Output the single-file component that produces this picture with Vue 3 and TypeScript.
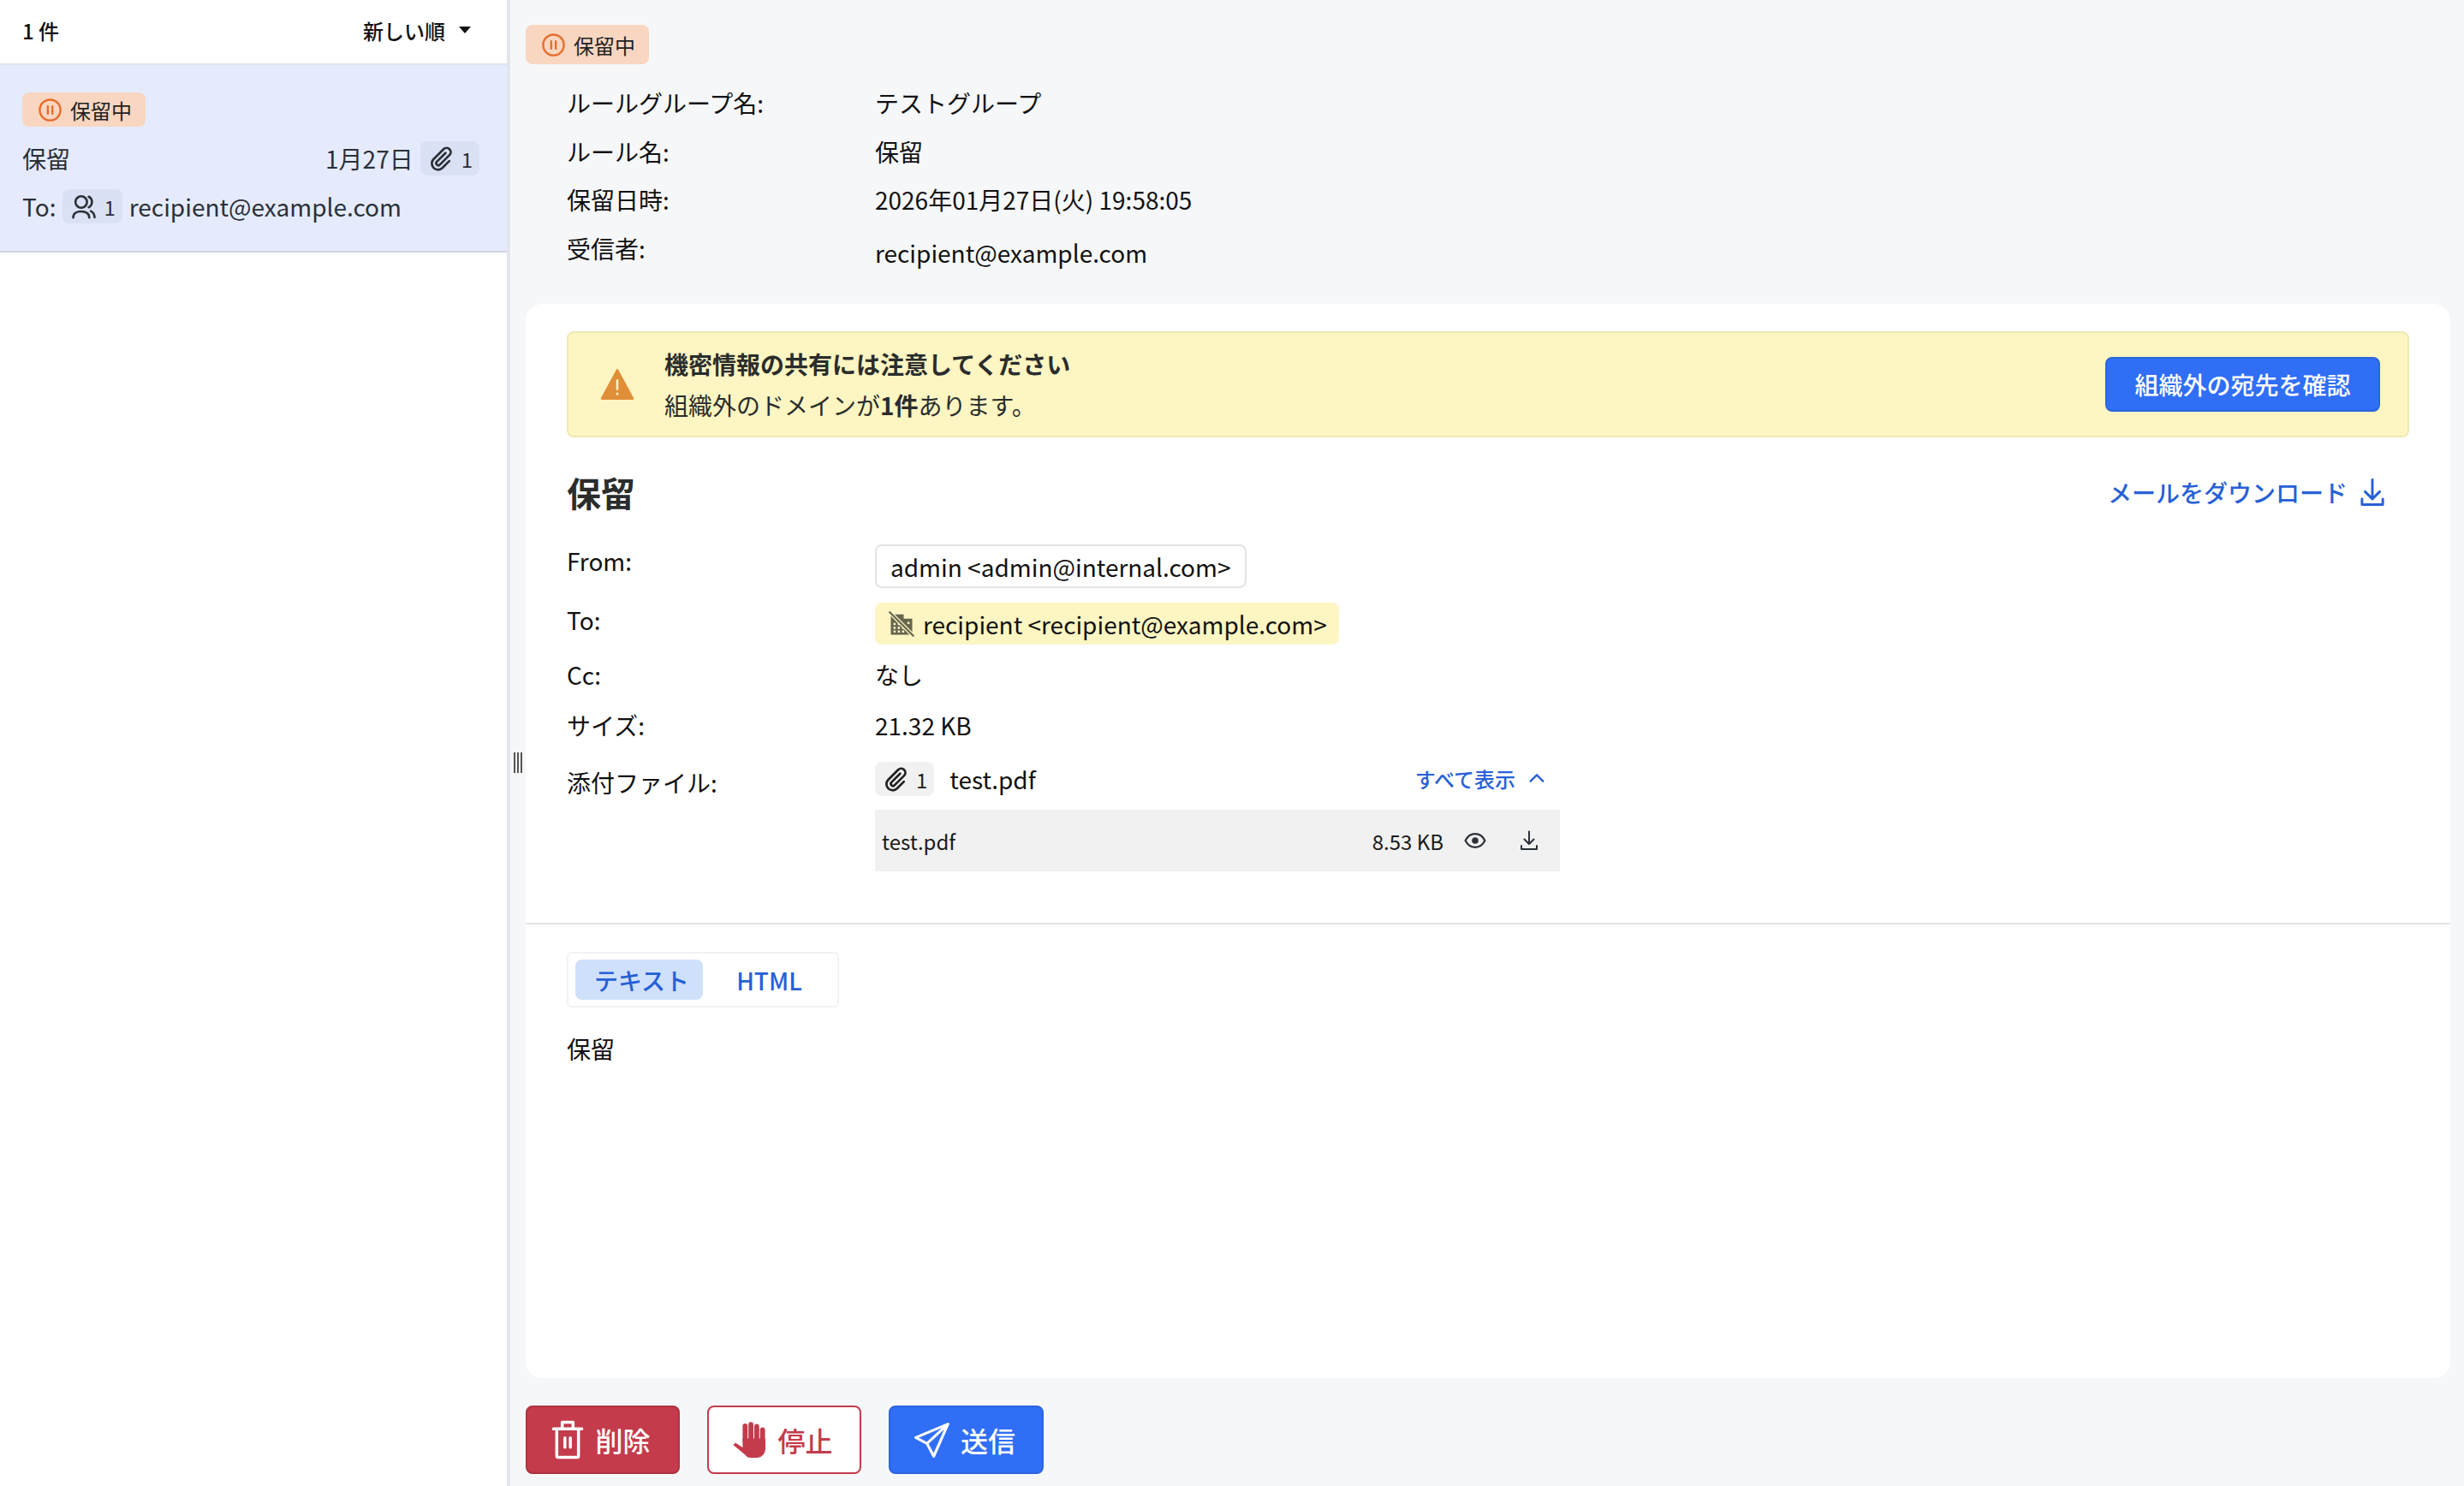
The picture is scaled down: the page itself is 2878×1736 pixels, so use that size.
<script setup lang="ts">
const metaRows = [
  { label: "ルールグループ名:", value: "テストグループ" },
  { label: "ルール名:", value: "保留" },
  { label: "保留日時:", value: "2026年01月27日(火) 19:58:05" },
  { label: "受信者:", value: "recipient@example.com" },
];

const clipPath =
  "M15.5 7 7.2 15.3a2 2 0 0 0 2.8 2.8L19.4 8.7a3.9 3.9 0 0 0-5.5-5.5L4.3 12.8a5.8 5.8 0 0 0 8.2 8.2l6.5-6.5";
</script>

<template>
  <div class="page">
    <aside class="list-pane">
      <div class="list-head">
        <span class="count">1 件</span>
        <span class="sort">新しい順<i class="caret"></i></span>
      </div>
      <div class="mail-item">
        <span class="status-pill">
          <svg class="pause" viewBox="0 0 24 24" fill="none" stroke="#e96d2d" stroke-width="2">
            <circle cx="12" cy="12" r="10" />
            <path d="M9.8 8.5v7M14.2 8.5v7" stroke-linecap="round" />
          </svg>
          保留中
        </span>
        <div class="item-row">
          <span>保留</span>
          <span class="item-right">
            1月27日
            <span class="count-chip">
              <svg class="clip" viewBox="0 0 24 24" fill="none" stroke="currentColor" stroke-width="2.2" stroke-linecap="round" stroke-linejoin="round">
                <path :d="clipPath" />
              </svg>
              1
            </span>
          </span>
        </div>
        <div class="item-row to-row">
          <span>To:</span>
          <span class="count-chip">
            <svg class="users" viewBox="0 0 24 24" fill="none" stroke="currentColor" stroke-width="2.1" stroke-linecap="round">
              <circle cx="9.5" cy="8" r="5.4" />
              <path d="M2 22.500c0-3.500 3-5.700 7.500-5.700s7.500 2.200 7.500 5.700M16.500 3c2 1 3 3 3 5s-1 4-3 5M18.500 16.500c2 1 3.300 3 3.500 5.800" />
            </svg>
            1
          </span>
          <span>recipient@example.com</span>
        </div>
      </div>
    </aside>

    <div class="splitter"><i></i><i></i><i></i></div>

    <main class="detail-pane">
      <span class="status-pill top-pill">
        <svg class="pause" viewBox="0 0 24 24" fill="none" stroke="#e96d2d" stroke-width="2">
          <circle cx="12" cy="12" r="10" />
          <path d="M9.8 8.5v7M14.2 8.500v7" stroke-linecap="round" />
        </svg>
        保留中
      </span>

      <dl class="meta">
        <div v-for="row in metaRows" :key="row.label" class="meta-row">
          <dt>{{ row.label }}</dt>
          <dd>{{ row.value }}</dd>
        </div>
      </dl>

      <section class="card">
        <div class="card-top">
          <div class="alert">
            <svg class="warn" viewBox="0 0 24 24">
              <path d="M12 2 1.200 22h21.600z" fill="#e08e37" stroke="#e08e37" stroke-width="1.500" stroke-linejoin="round" />
              <path d="M12 8.500v7.500M12 17.800v1.700" stroke="#fdf5c2" stroke-width="1.500" />
            </svg>
            <div class="alert-text">
              <strong>機密情報の共有には注意してください</strong>
              <p>組織外のドメインが<b>1件</b>あります。</p>
            </div>
            <button class="primary alert-btn">組織外の宛先を確認</button>
          </div>

          <div class="title-row">
            <h1>保留</h1>
            <a class="download">
              メールをダウンロード
              <svg class="dl" viewBox="0 0 24 28" fill="none" stroke="currentColor" stroke-width="2.400" stroke-linecap="round" stroke-linejoin="round">
                <path d="M12 2v18M5 13.500l7 7 7-7M2 20.500V26h20v-5.500" />
              </svg>
            </a>
          </div>

          <div class="fields">
            <div class="field from">
              <label>From:</label>
              <span class="addr-box">admin &lt;admin@internal.com&gt;</span>
            </div>
            <div class="field to">
              <label>To:</label>
              <span class="addr-chip">
                <svg class="building" viewBox="0 0 24 24">
                  <path d="M2 3h12v4h8v15H2z" fill="#66664f" />
                  <path d="M4.500 12h2M8.500 12h2M4.500 15.500h2M8.500 15.500h2M12.500 15.500h2M4.500 19h2M8.500 19h2M12.500 19h2M17.500 11h2" stroke="#fdf5c2" stroke-width="2" />
                  <path d="M1 1 23 23" stroke="#fdf5c2" stroke-width="3.800" />
                  <path d="M.5.500 23.500 23.500" stroke="#66664f" stroke-width="1.800" />
                </svg>
                recipient &lt;recipient@example.com&gt;
              </span>
            </div>
            <div class="field cc">
              <label>Cc:</label>
              <span>なし</span>
            </div>
            <div class="field size">
              <label>サイズ:</label>
              <span>21.32 KB</span>
            </div>
            <div class="field attach">
              <label>添付ファイル:</label>
              <div class="attach-body">
                <div class="attach-head">
                  <span class="count-chip grey">
                    <svg class="clip" viewBox="0 0 24 24" fill="none" stroke="currentColor" stroke-width="2.2" stroke-linecap="round" stroke-linejoin="round">
                      <path :d="clipPath" />
                    </svg>
                    1
                  </span>
                  <span class="file-name">test.pdf</span>
                  <a class="show-all">
                    すべて表示
                    <svg class="chev" viewBox="0 0 24 24" fill="none" stroke="currentColor" stroke-width="2.500" stroke-linecap="round" stroke-linejoin="round">
                      <path d="M4 16 12 8l8 8" />
                    </svg>
                  </a>
                </div>
                <div class="file-row">
                  <span>test.pdf</span>
                  <span class="file-size">8.53 KB</span>
                  <svg class="eye" viewBox="0 0 24 24" fill="none" stroke="#2b3038" stroke-width="2">
                    <path d="M1.500 12C4 7 7.800 4.800 12 4.800S20 7 22.500 12C20 17 16.200 19.200 12 19.200S4 17 1.500 12z" />
                    <circle cx="12" cy="12" r="3.500" fill="#2b3038" stroke="none" />
                  </svg>
                  <svg class="file-dl" viewBox="0 0 24 24" fill="none" stroke="#2b3038" stroke-width="2" stroke-linecap="round" stroke-linejoin="round">
                    <path d="M12 1.500V16M6.500 10.500l5.500 5.500 5.500-5.500M3 18v4h18v-4" />
                  </svg>
                </div>
              </div>
            </div>
          </div>
        </div>

        <div class="card-body">
          <div class="tabs">
            <span class="tab active">テキスト</span>
            <span class="tab">HTML</span>
          </div>
          <p class="body-text">保留</p>
        </div>
      </section>

      <footer class="actions">
        <button class="danger">
          <svg class="trash" viewBox="0 0 24 30" fill="none" stroke="currentColor" stroke-width="2.200" stroke-linecap="round" stroke-linejoin="round">
            <path d="M1.500 7h21M8 7V2h8v5M4 7v20a1 1 0 0 0 1 1h14a1 1 0 0 0 1-1V7M10 13.500v7M14 13.500v7" />
          </svg>
          削除
        </button>
        <button class="danger-outline">
          <svg class="hand" viewBox="0 0 24 26" fill="currentColor">
            <path d="M9.100 3v11M13.300 1.900V14M17.500 3.400V14M21.700 5.900V14" stroke="currentColor" stroke-width="3.600" stroke-linecap="round" />
            <path d="M7.300 12h16.500v7c0 4-2.700 7-6.500 7h-4c-2 0-3.100-.7-4.200-2.200L.500 16.700l1.600-1.500 5.200 3.300z" />
          </svg>
          停止
        </button>
        <button class="primary send">
          <svg class="plane" viewBox="0 0 24 24" fill="none" stroke="currentColor" stroke-width="1.800" stroke-linejoin="round" stroke-linecap="round">
            <path d="M23 1.500 1.500 10.500l7.500 4 4.500 8.500zM23 1.500 9 14.500" />
          </svg>
          送信
        </button>
      </footer>
    </main>
  </div>
</template>

<style>
body {
  margin: 0;
}
</style>

<style scoped>
.page {
  display: flex;
  height: 1736px;
  width: 2878px;
  font-family: "Noto Sans CJK JP", "Noto Sans", sans-serif;
  font-size: 28px;
  color: #111;
  background: #f6f7f9;
  overflow: hidden;
}
.list-pane {
  width: 592px;
  flex: none;
  background: #fff;
  border-right: 4px solid #e2e5ec;
}
.list-head {
  height: 70px;
  padding: 0 42px 4px 26px;
  display: flex;
  align-items: center;
  justify-content: space-between;
  font-size: 24px;
  font-weight: 500;
  border-bottom: 2px solid #dfe4ec;
  box-sizing: content-box;
}
.sort {
  display: flex;
  align-items: center;
  gap: 16px;
}
.caret {
  width: 0;
  height: 0;
  border-left: 7px solid transparent;
  border-right: 7px solid transparent;
  border-top: 8px solid #111;
}
.mail-item {
  background: #e5ebfd;
  border-bottom: 2px solid #cdd5e4;
  height: 219px;
  box-sizing: border-box;
  padding: 32px 32px 0 26px;
  color: #2b3038;
  display: flex;
  flex-direction: column;
  align-items: flex-start;
}
.status-pill {
  display: inline-flex;
  align-items: center;
  gap: 10px;
  height: 40px;
  padding: 0 16px 0 18px;
  background: #f8d6c0;
  border-radius: 8px;
  font-size: 24px;
  color: #222;
}
.pause {
  width: 29px;
  height: 29px;
  margin-right: -1px;
}
.item-row {
  display: flex;
  align-items: center;
  justify-content: space-between;
  width: 100%;
  height: 46px;
  margin-top: 14px;
}
.item-right {
  display: flex;
  align-items: center;
  gap: 8px;
}
.to-row {
  justify-content: flex-start;
  gap: 8px;
  margin-top: 10px;
}
.count-chip {
  display: inline-flex;
  align-items: center;
  gap: 8px;
  height: 40px;
  padding: 0 8px 0 10px;
  border-radius: 8px;
  background: #dbe1f4;
  font-size: 24px;
}
.count-chip.grey {
  background: #f1f1f1;
  color: #222;
}
.clip {
  width: 30px;
  height: 30px;
}
.users {
  width: 30px;
  height: 30px;
}
.splitter {
  width: 18px;
  flex: none;
  display: flex;
  align-items: center;
  justify-content: center;
  gap: 2px;
}
.splitter i {
  width: 2px;
  height: 24px;
  margin-top: 46px;
  background: #555;
}
.detail-pane {
  flex: 1;
  min-width: 0;
  padding: 29px 16px 14px 0;
  display: flex;
  flex-direction: column;
  align-items: flex-start;
  box-sizing: border-box;
}
.top-pill {
  height: 46px;
  flex: none;
}
.meta {
  margin: 17px 0 0 48px;
}
.meta-row {
  display: flex;
  height: 56.5px;
  align-items: center;
}
.meta-row:last-child {
  height: 63.5px;
  align-items: flex-start;
}
.meta-row:last-child dt {
  margin-top: 8px;
}
.meta-row:last-child dd {
  margin-top: 13px;
}
.meta dt {
  width: 360px;
}
.meta dd {
  margin: 0;
}
.card {
  width: 100%;
  flex: 1;
  min-height: 0;
  margin-top: 30px;
  background: #fff;
  border-radius: 20px;
  display: flex;
  flex-direction: column;
}
.card-top {
  padding: 32px 48px 0;
  height: 725px;
  box-sizing: border-box;
  border-bottom: 2px solid #e2e2e4;
  flex: none;
}
.alert {
  display: flex;
  align-items: center;
  height: 124px;
  box-sizing: border-box;
  padding: 0 32px 0 35px;
  background: #fdf5c2;
  border: 2px solid #f0e8b4;
  border-radius: 8px;
}
.warn {
  width: 44px;
  height: 40px;
  flex: none;
}
.alert-text {
  margin-left: 33px;
  flex: 1;
  color: #2a2d2c;
}
.alert-text strong {
  display: block;
  font-weight: 700;
  line-height: 40px;
}
.alert-text p {
  margin: 8px 0 0;
  line-height: 40px;
}
button {
  font-family: inherit;
  cursor: pointer;
}
.primary {
  background: #306ef6;
  border: 2px solid #2b64de;
  border-radius: 8px;
  color: #fff;
}
.alert-btn {
  width: 321px;
  height: 64px;
  font-size: 28px;
  font-weight: 500;
}
.title-row {
  display: flex;
  align-items: center;
  justify-content: space-between;
  margin-top: 32px;
  height: 64px;
  padding-right: 28px;
}
h1 {
  margin: 0;
  font-size: 40px;
  font-weight: 700;
  color: #2a2d2c;
}
.download {
  display: flex;
  align-items: center;
  gap: 14px;
  color: #2760d6;
  font-size: 28px;
  font-weight: 500;
}
.dl {
  width: 30px;
  height: 34px;
}
.fields {
  margin-top: 29px;
}
.field {
  display: flex;
}
.field label {
  width: 360px;
  flex: none;
}
.field.from {
  height: 68px;
}
.field.from label {
  line-height: 38px;
}
.addr-box {
  height: 51px;
  box-sizing: border-box;
  padding: 0 16px;
  display: flex;
  align-items: center;
  border: 2px solid #e2e3e6;
  border-radius: 8px;
}
.field.to {
  height: 55px;
}
.field.to label {
  line-height: 40px;
}
.addr-chip {
  height: 49px;
  box-sizing: border-box;
  padding: 0 14px 0 16px;
  display: flex;
  align-items: center;
  gap: 10px;
  background: #fdf5c2;
  border-radius: 8px;
}
.building {
  width: 30px;
  height: 30px;
}
.field.cc,
.field.size {
  align-items: center;
}
.field.cc {
  height: 58px;
}
.field.size {
  height: 59px;
  margin-bottom: 11px;
}
.field.attach label {
  line-height: 54px;
}
.attach-body {
  width: 800px;
}
.attach-head {
  display: flex;
  align-items: center;
  height: 46px;
  gap: 18px;
}
.attach-head .count-chip {
  gap: 8px;
  padding: 0 8px 0 10px;
}
.show-all {
  margin-left: auto;
  margin-right: 16px;
  margin-bottom: 2px;
  display: flex;
  align-items: center;
  gap: 14px;
  font-size: 24px;
  font-weight: 500;
  color: #2760d6;
}
.chev {
  width: 22px;
  height: 22px;
}
.file-row {
  margin-top: 13px;
  height: 72px;
  background: #f1f1f1;
  display: flex;
  align-items: center;
  padding: 0 16px 0 8px;
  font-size: 24px;
  color: #1a1a1a;
}
.file-size {
  margin-left: auto;
}
.eye {
  width: 26px;
  height: 26px;
  margin-left: 24px;
}
.file-dl {
  width: 24px;
  height: 26px;
  margin-left: 38px;
  margin-right: 8px;
}
.card-body {
  padding: 32px 48px 0;
}
.tabs {
  width: 318px;
  height: 65px;
  box-sizing: border-box;
  border: 2px solid #f1f2f4;
  border-radius: 6px;
  padding: 7px 8px;
  display: flex;
}
.tab {
  width: 149px;
  flex: none;
  display: flex;
  align-items: center;
  justify-content: center;
  padding-left: 6px;
  box-sizing: border-box;
  color: #2760d6;
  font-weight: 500;
  border-radius: 8px;
}
.tab.active {
  background: #cfe0fb;
}
.body-text {
  margin: 28px 0 0;
  line-height: 40px;
}
.actions {
  display: flex;
  gap: 32px;
  margin-top: 32px;
  height: 80px;
  flex: none;
}
.actions button {
  width: 180px;
  height: 80px;
  display: flex;
  align-items: center;
  justify-content: center;
  gap: 13px;
  font-size: 32px;
  font-weight: 500;
  border-radius: 8px;
  padding: 0 4px 0 0;
  box-sizing: border-box;
}
.trash {
  width: 38px;
  height: 48px;
}
.hand {
  width: 40px;
  height: 42px;
}
.plane {
  width: 42px;
  height: 42px;
}
.danger {
  background: #c43b4b;
  border: 2px solid #ad3341;
  color: #fff;
}
.danger-outline {
  background: #fff;
  border: 2px solid #c43b4b;
  color: #c43b4b;
}
.actions .send {
  width: 181px;
}
</style>
